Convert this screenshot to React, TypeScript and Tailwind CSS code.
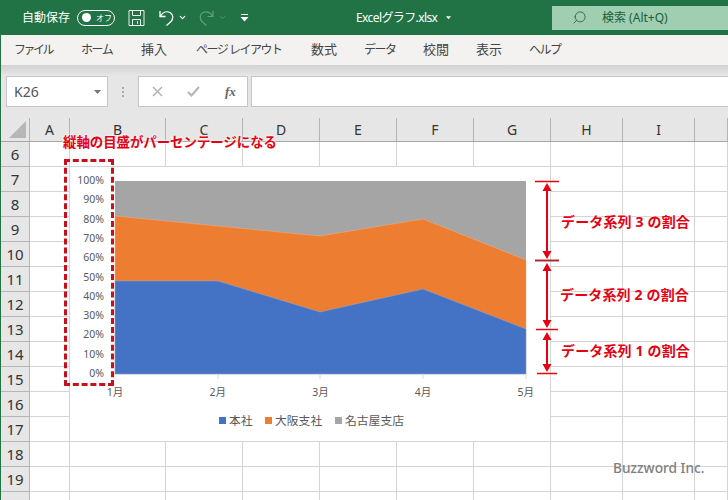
import { ChevronDown, Search } from "lucide-react";

const font = "font-['Noto_Sans','Noto_Sans_CJK_JP',sans-serif]";

const columns = [
  { name: "A", width: "w-[40px]" },
  { name: "B", width: "w-[96px]" },
  { name: "C", width: "w-[77px]" },
  { name: "D", width: "w-[77px]" },
  { name: "E", width: "w-[77px]" },
  { name: "F", width: "w-[77px]" },
  { name: "G", width: "w-[77px]" },
  { name: "H", width: "w-[72px]" },
  { name: "I", width: "w-[72px]" },
  { name: "", width: "flex-1" },
];
const rows = [6, 7, 8, 9, 10, 11, 12, 13, 14, 15, 16, 17, 18, 19, 20];
const menu = [
  { label: "ファイル", style: "w-[67px] text-[12px] tracking-[-2.5px]" },
  { label: "ホーム", style: "w-[60px] text-[12px] tracking-[-1.5px]" },
  { label: "挿入", style: "w-[55px] text-[13px]" },
  { label: "ページ レイアウト", style: "w-[115px] text-[12px] tracking-[-1.5px]" },
  { label: "数式", style: "w-[53px] text-[13px]" },
  { label: "データ", style: "w-[59px] text-[12px] tracking-[-1.5px]" },
  { label: "校閲", style: "w-[53px] text-[13px]" },
  { label: "表示", style: "w-[53px] text-[13px]" },
  { label: "ヘルプ", style: "w-[50px] text-[12px] tracking-[-1.5px]" },
];

function TitleBar() {
  return (
    <div className="flex h-[35px] items-center bg-[#217346] text-white">
      <span className="ml-[22px] w-[55px] text-[12px]">自動保存</span>
      <div className="flex h-[16px] w-[38px] items-center rounded-full border border-white pl-[4px]">
        <span className="h-[9px] w-[9px] rounded-full bg-white" />
        <span className="ml-[5px] text-[8px] leading-none">オフ</span>
      </div>
      <svg className="ml-[13px]" width="17" height="18" viewBox="0 0 17 18" fill="none" stroke="#e8f1ec" strokeWidth="1">
        <path d="M1 1.5h15v15H1zM4.5 1.5v5h8v-5M4.5 16.5v-6h8v6M9.5 12v3" />
      </svg>
      <svg className="ml-[13px]" width="17" height="18" viewBox="0 0 17 18" fill="none" stroke="#fff" strokeWidth="1.3">
        <path d="M2 2v5.5h5.5M2.5 7C5 3 9 2 12 3.5c3.5 2 3.500 6.500 1 9l-4.500 4" />
      </svg>
      <ChevronDown className="ml-[3px]" size={9} strokeWidth={3} />
      <svg className="ml-[11px]" width="17" height="18" viewBox="0 0 17 18" fill="none" stroke="#5f9f7d" strokeWidth="1.2">
        <path d="M15 2v5.500H9.500M14.500 7C12 3 8 2 5 3.500c-3.500 2-3.500 6.500-1 9l4.500 4" />
      </svg>
      <ChevronDown className="ml-[3px] text-[#5f9f7d]" size={9} strokeWidth={2} />
      <svg className="ml-[13px]" width="9" height="8" viewBox="0 0 9 8" fill="#fff">
        <path d="M1 0h7v1H1zM0.500 3h8L4.500 7.500z" />
      </svg>
      <span className="ml-[107px] w-[90px] text-[12px] tracking-[-0.6px]">Excelグラフ.xlsx</span>
      <svg width="5" height="4" viewBox="0 0 6 4" fill="#fff">
        <path d="M0 0h6L3 3.500z" />
      </svg>
      <div className="ml-[101px] flex h-[24px] flex-1 items-center bg-[#a0ceb1] pl-[20px] text-[#1c5e3a]">
        <Search size={15} strokeWidth={1.3} className="-scale-x-100" />
        <span className="ml-[15px] text-[12px]">検索 (Alt+Q)</span>
      </div>
    </div>
  );
}

function FormulaBar() {
  return (
    <div className="flex h-[53px] bg-[#e6e6e6] bg-gradient-to-b from-[#d2d2d2] from-0% to-[#e6e6e6] to-[20%] pt-[11px]">
      <div className="ml-[5px] flex h-[31px] w-[102px] items-center justify-between border border-[#c6c6c6] bg-white pl-[7px] pr-[6px] text-[14px] text-[#555]">
        K26
        <svg width="7" height="4" viewBox="0 0 7 4" fill="#777">
          <path d="M0 0h7L3.500 4z" />
        </svg>
      </div>
      <div className="ml-[14px] flex h-[31px] w-[2px] flex-col items-center justify-center gap-[2px]">
        <span className="h-[2px] w-[2px] bg-[#aaa]" />
        <span className="h-[2px] w-[2px] bg-[#aaa]" />
        <span className="h-[2px] w-[2px] bg-[#aaa]" />
      </div>
      <div className="ml-[14px] flex h-[31px] w-[110px] items-center border border-[#c6c6c6] bg-white pl-[13px]">
        <svg width="11" height="11" viewBox="0 0 11 11" stroke="#b5b5b5" strokeWidth="1.6">
          <path d="M1 1l9 9M10 1l-9 9" />
        </svg>
        <svg className="ml-[24px]" width="13" height="11" viewBox="0 0 13 11" fill="none" stroke="#b5b5b5" strokeWidth="2">
          <path d="M1 6l3.500 3.500L12 1" />
        </svg>
        <span className="ml-[25px] font-['Liberation_Serif',serif] text-[13px] font-bold italic leading-none text-[#666]">fx</span>
      </div>
      <div className="ml-[3px] h-[31px] flex-1 border border-r-0 border-[#c6c6c6] bg-white" />
    </div>
  );
}

function Sheet() {
  return (
    <div>
      <div className="flex h-[24px] border-b border-[#a6a6a6] bg-[#e6e6e6]">
        <div className="flex w-[29px] items-end justify-end border-r border-[#b5b5b5] pb-[3px] pr-[3px]">
          <span className="h-[17px] w-[17px] bg-[#b7b7b7] [clip-path:polygon(100%_0,100%_100%,0_100%)]" />
        </div>
        {columns.map((c) => (
          <div key={c.name} className={`${c.width} flex items-center justify-center border-r border-[#b5b5b5] text-[14px] text-[#333]`}>
            {c.name}
          </div>
        ))}
      </div>
      {rows.map((r) => (
        <div key={r} className="flex h-[25px]">
          <div className="flex w-[29px] items-center justify-center border-b border-r border-[#b5b5b5] bg-[#e6e6e6] text-[15px] text-[#333]">
            {r}
          </div>
          {columns.map((c) => (
            <div key={c.name} className={`${c.width} border-b border-r border-[#d4d4d4]`} />
          ))}
        </div>
      ))}
    </div>
  );
}

function Chart() {
  const yLabels = ["100%", "90%", "80%", "70%", "60%", "50%", "40%", "30%", "20%", "10%", "0%"];
  const xLabels = ["1月", "2月", "3月", "4月", "5月"];
  // 座標はチャート左上(70,166)基準
  return (
    <svg className={`absolute left-[70px] top-[167px] ${font}`} width="480" height="274" viewBox="0 1 480 274">
      <rect y="1" width="480" height="274" fill="#fff" />
      <path d="M45 15H456V208H45z" fill="#a5a5a5" />
      <path d="M45 50L148 60L250 70L353 53L456 94V208H45z" fill="#ed7d31" stroke="#f4b183" strokeWidth="0.5" />
      <path d="M45 115L148 115L250 146L353 123L456 163V208H45z" fill="#4472c4" stroke="#8faadc" strokeWidth="0.5" />
      <path d="M45 208.500H456M45 208v5M148 208v5M250 208v5M353 208v5M456 208v5" stroke="#d9d9d9" fill="none" />
      {yLabels.map((t, i) => (
        <text key={t} x="34" y={18 + i * 19.3} textAnchor="end" fontSize="10.500" fill="#595959">{t}</text>
      ))}
      {xLabels.map((t, i) => (
        <text key={t} x={45 + i * 102.7} y="230" textAnchor="middle" fontSize="10.500" fill="#595959">{t}</text>
      ))}
      <rect x="149" y="251" width="7" height="7" fill="#4472c4" />
      <text x="159" y="259" fontSize="11.800" fill="#595959">本社</text>
      <rect x="195" y="251" width="7" height="7" fill="#ed7d31" />
      <text x="205" y="259" fontSize="11.800" fill="#595959">大阪支社</text>
      <rect x="265" y="251" width="7" height="7" fill="#a5a5a5" />
      <text x="275" y="259" fontSize="11.800" fill="#595959">名古屋支店</text>
    </svg>
  );
}

function Arrows() {
  const red = "#e60012";
  return (
    <svg className="absolute left-[533px] top-[176px]" width="30" height="204" viewBox="0 0 30 204" fill="none">
      <path d="M2 5.500H26M2 84.500H26M3 153.500H25M4 197.500H24" stroke={red} strokeWidth="1.500" />
      <path d="M2 84.500H26" stroke="#9c2b2b" strokeWidth="1.500" />
      <path d="M14 12V78M14 91V147M14 160V191" stroke={red} strokeWidth="2" />
      <path d="M14 7L9.500 15H18.500zM14 83L9.500 75H18.500zM14 87L9.500 95H18.500zM14 152L9.500 144H18.500zM14 156L9.500 164H18.500zM14 196L9.500 188H18.500z" fill={red} />
    </svg>
  );
}

const note = "absolute text-[14px] font-bold leading-none tracking-[0.15px] text-[#e60012] [text-shadow:0_0_2px_#fff,0_0_3px_#fff]";

export default function App() {
  return (
    <div className={`relative h-[500px] w-[728px] overflow-hidden bg-white ${font}`}>
      <TitleBar />
      <div className="border-l border-[#217346]">
        <div className="flex h-[30px] items-center bg-[#f3f2f1] pl-[13px] text-[#444]">
          {menu.map((m) => (
            <span key={m.label} className={m.style}>{m.label}</span>
          ))}
        </div>
        <FormulaBar />
        <Sheet />
      </div>
      <Chart />
      <div className="absolute left-[64px] top-[159px] h-[227px] w-[50px] border-[3px] border-dashed border-[#c8101c]" />
      <span className="absolute left-[63px] top-[136px] text-[13.400px] font-bold leading-none text-[#e60012] [text-shadow:0_0_2px_#fff,0_0_3px_#fff]">
        縦軸の目盛がパーセンテージになる
      </span>
      <Arrows />
      <span className={`${note} left-[561px] top-[215px]`}>データ系列 3 の割合</span>
      <span className={`${note} left-[560px] top-[288px]`}>データ系列 2 の割合</span>
      <span className={`${note} left-[561px] top-[344px]`}>データ系列 1 の割合</span>
      <span className="absolute left-[613px] top-[458px] text-[13.700px] font-medium text-[#808080]">Buzzword Inc.</span>
    </div>
  );
}
